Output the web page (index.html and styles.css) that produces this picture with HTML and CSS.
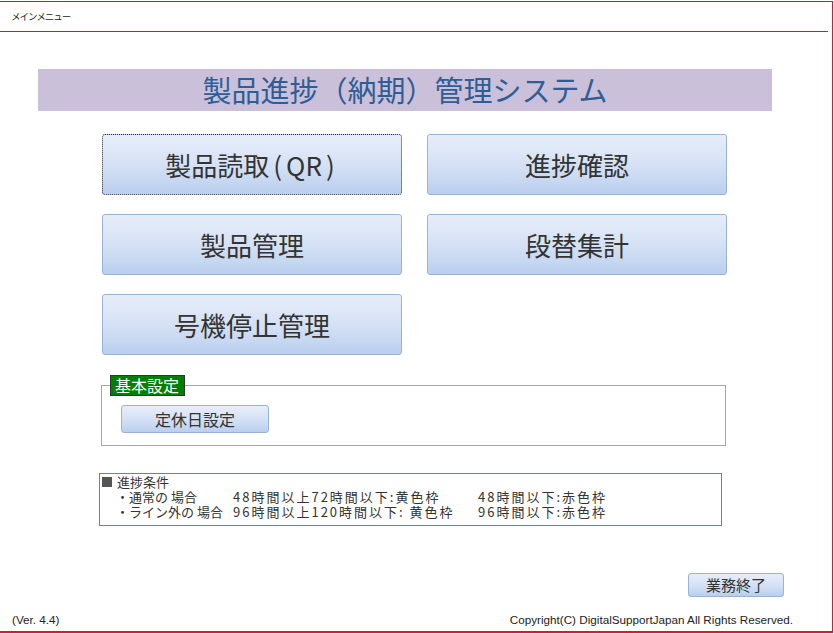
FILE: index.html
```html
<!DOCTYPE html>
<html lang="ja">
<head>
<meta charset="utf-8">
<title>メインメニュー</title>
<link rel="stylesheet" href="styles.css">
</head>
<body>
<div class="frame">
  <div class="titlebar">メインメニュー</div>
  <div class="banner">製品進捗（納期）管理システム</div>
  <div class="menu">
    <button class="btn big focused">製品読取<span class="paren">(</span>QR<span class="paren">)</span></button>
    <button class="btn big">進捗確認</button>
    <button class="btn big">製品管理</button>
    <button class="btn big">段替集計</button>
    <button class="btn big">号機停止管理</button>
  </div>
  <fieldset class="group">
    <legend class="group-label">基本設定</legend>
    <button class="btn small">定休日設定</button>
  </fieldset>
  <div class="conditions">
    <div class="cond-head"><span class="square"></span>進捗条件</div>
    <div class="cond-row">
      <span class="c1">・通常の 場合</span>
      <span class="c2">48時間以上72時間以下:黄色枠</span>
      <span class="c3">48時間以下:赤色枠</span>
    </div>
    <div class="cond-row">
      <span class="c1">・ライン外の 場合</span>
      <span class="c2">96時間以上120時間以下: 黄色枠</span>
      <span class="c3">96時間以下:赤色枠</span>
    </div>
  </div>
  <div class="exit-row">
    <button class="btn exit">業務終了</button>
  </div>
  <div class="footer">
    <span>(Ver. 4.4)</span>
    <span>Copyright(C) DigitalSupportJapan All Rights Reserved.</span>
  </div>
</div>
</body>
</html>
```

FILE: styles.css
```css
html, body {
  margin: 0;
  padding: 0;
  background: #ffffff;
}

body {
  font-family: "Noto Sans CJK JP", "Noto Sans", sans-serif;
  color: #333333;
}

.frame {
  box-sizing: border-box;
  width: 833px;
  height: 632px;
  margin-top: 1px;
  border-top: 1px solid #a52a3a;
  border-right: 1px solid #c8202f;
  border-bottom: 2px solid #c8202f;
  display: flex;
  flex-direction: column;
}

.titlebar {
  box-sizing: border-box;
  width: 828px;
  height: 30px;
  border-bottom: 1px solid #a52a3a;
  padding-left: 11px;
  font-size: 9.5px;
  letter-spacing: -1px;
  line-height: 29px;
  color: #222222;
}

.banner {
  margin: 37px 0 0 38px;
  width: 734px;
  height: 42px;
  background: #cbc0da;
  color: #2e5e95;
  font-size: 29px;
  line-height: 40px;
  text-align: center;
}

.menu {
  margin: 23px 0 0 102px;
  display: grid;
  grid-template-columns: 300px 300px;
  grid-auto-rows: 61px;
  column-gap: 25px;
  row-gap: 19px;
}

.btn {
  box-sizing: border-box;
  font-family: "Noto Sans CJK JP", "Noto Sans", sans-serif;
  color: #333333;
  background: linear-gradient(to bottom, #e7eefa 0%, #d3e0f4 55%, #b9cfee 100%);
  border: 1px solid #98b3d8;
  border-radius: 3px;
  padding: 0;
  cursor: default;
}

.btn.big {
  font-size: 26px;
  line-height: 1;
}

.paren {
  margin: 0 4px;
}

.btn.focused {
  border: 1px dotted #333333;
}

.group {
  box-sizing: border-box;
  margin: 20px 0 0 101px;
  width: 625px;
  border: 1px solid #a6a6a6;
  padding: 9px 0 12px 19px;
  min-inline-size: 0;
}

.group-label {
  margin-left: -11px;
  padding: 0 5px 0 4px;
  background: #008000;
  color: #ffffff;
  border: 1px solid #2b3a2b;
  font-size: 16px;
  line-height: 19px;
}

.btn.small {
  width: 148px;
  height: 28px;
  font-size: 16px;
  line-height: 1;
}

.conditions {
  box-sizing: border-box;
  margin: 27px 0 0 99px;
  width: 623px;
  height: 53px;
  border: 1px solid #4d89c9;
  padding: 0 0 0 2px;
  font-size: 13px;
  line-height: 15px;
  color: #333333;
}

.cond-head {
  display: flex;
  align-items: center;
  gap: 5px;
}

.square {
  width: 10px;
  height: 10px;
  background: #555555;
}

.cond-row {
  display: grid;
  grid-template-columns: 117px 245px auto;
  padding-left: 14px;
  white-space: nowrap;
}

.c2, .c3 {
  letter-spacing: 2px;
}

.exit-row {
  margin: 46px 0 0 688px;
}

.btn.exit {
  width: 96px;
  height: 24px;
  font-size: 15px;
  line-height: 1;
}

.footer {
  margin-top: auto;
  display: flex;
  justify-content: space-between;
  padding: 0 39px 4px 12px;
  font-family: "Liberation Sans", Arial, sans-serif;
  font-size: 11.7px;
  line-height: 14px;
  color: #222222;
}
```
